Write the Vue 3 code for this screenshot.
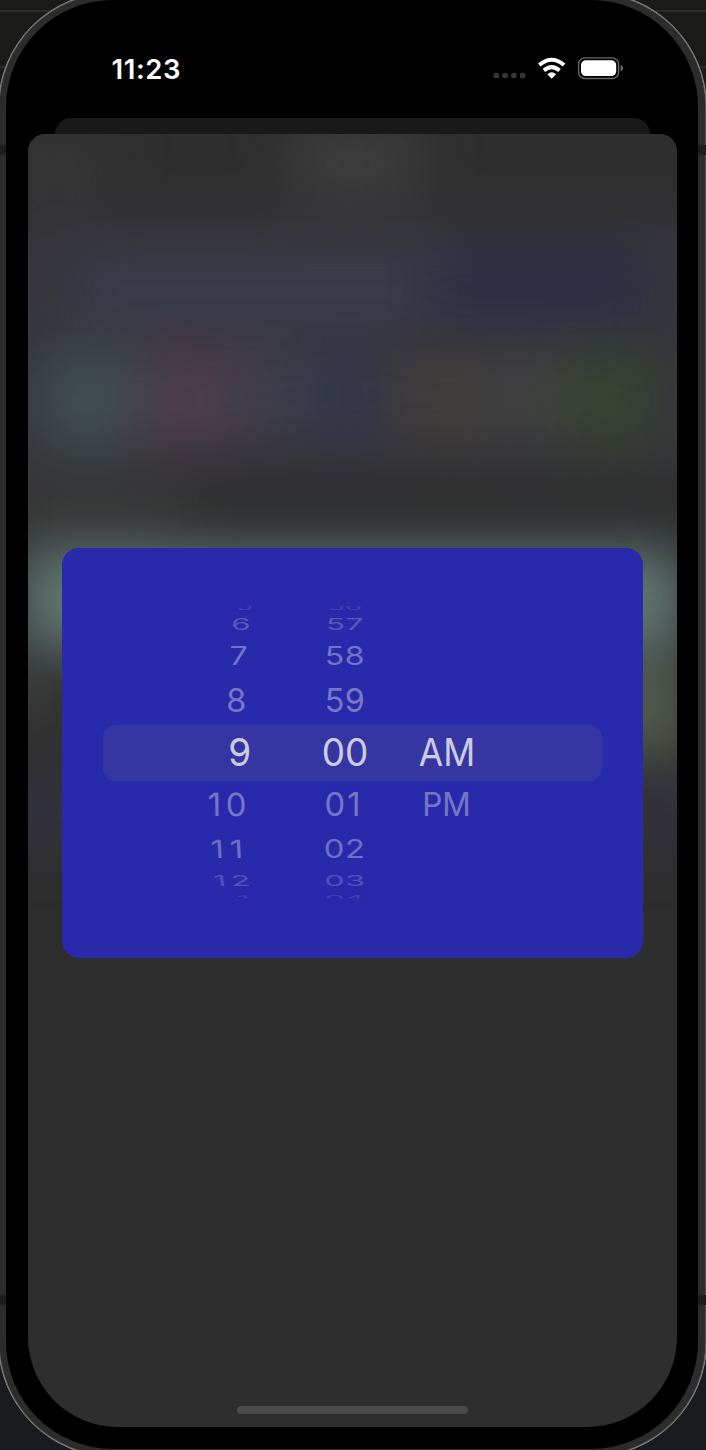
<script setup>
const glows = [
  { x: 0, y: 130, w: 110, h: 70, c: '#3e3e3e', o: 0.5 },
  { x: 290, y: 120, w: 130, h: 80, c: '#474747', o: 0.6 },
  { x: -40, y: 215, w: 785, h: 260, c: '#3b3a42', o: 0.6 },
  { x: 70, y: 250, w: 360, h: 78, c: '#3e3d52', o: 0.7 },
  { x: 430, y: 248, w: 220, h: 78, c: '#2c2d49', o: 0.8 },
  { x: 40, y: 352, w: 98, h: 94, c: '#445356', o: 0.85 },
  { x: 148, y: 352, w: 76, h: 94, c: '#56404f', o: 0.85 },
  { x: 224, y: 352, w: 78, h: 90, c: '#42404f', o: 0.8 },
  { x: 302, y: 346, w: 88, h: 98, c: '#343850', o: 0.8 },
  { x: 392, y: 352, w: 88, h: 94, c: '#433e39', o: 0.85 },
  { x: 480, y: 352, w: 82, h: 90, c: '#434343', o: 0.8 },
  { x: 562, y: 350, w: 96, h: 96, c: '#394531', o: 0.95 },
  { x: 0, y: 470, w: 180, h: 80, c: '#404040', o: 0.5 },
  { x: 22, y: 550, w: 662, h: 98, c: '#637977', o: 1 },
  { x: -40, y: 650, w: 110, h: 80, c: '#3d3d3d', o: 0.7 },
  { x: 600, y: 660, w: 90, h: 96, c: '#545c4e', o: 1 },
  { x: -40, y: 780, w: 785, h: 66, c: '#333242', o: 0.8 },
]

// Each row of the drum: baseline, horizontal / vertical squeeze, and per column
// [label, ink centre, letter spacing, own horizontal squeeze]
const rows = [
  { y: 610.2, sx: 0.73, sy: 0.22, skew: 0, o: 0.14, h: ['5', 244.5], m: ['56', 345] },
  { y: 630.2, sx: 0.81, sy: 0.4, skew: 0, o: 0.25, h: ['6', 241], m: ['57', 344.7, 0.8] },
  { y: 665, sx: 0.83, sy: 0.65, skew: 0, o: 0.4, h: ['7', 238.5], m: ['58', 344.7, 0.6] },
  { y: 712.3, sx: 0.84, sy: 0.84, skew: 0, o: 0.42, h: ['8', 236.2], m: ['59', 344.7, 0.5] },
  { y: 766, sx: 0.96, sy: 1, skew: 0, o: 0.78, h: ['9', 239.7], m: ['00', 345], p: ['AM', 447, 0, 0.92] },
  { y: 816, sx: 0.85, sy: 0.83, skew: 1, o: 0.41, h: ['10', 227.3, 5.5], m: ['01', 342.5, 2.5], p: ['PM', 446.5, 0, 0.82] },
  { y: 858, sx: 0.85, sy: 0.65, skew: 3, o: 0.37, h: ['11', 227.3, 7], m: ['02', 344.3, 0.6] },
  { y: 886, sx: 0.84, sy: 0.39, skew: 8, o: 0.22, h: ['12', 232.5, 5.5], m: ['03', 344.5, 0.4] },
  { y: 900.5, sx: 0.8, sy: 0.2, skew: 12, o: 0.14, h: ['1', 244], m: ['04', 344.5] },
]
const labels = rows.flatMap((r) =>
  ['h', 'm', 'p'].filter((k) => r[k]).map((k) => {
    const [text, cx, gap = 0, sx = r.sx] = r[k]
    return {
      key: k + r.y,
      text,
      gap,
      color: r.sy === 1 ? '#f5f5f3' : '#e4e4ef',
      opacity: r.o,
      transform: `translate(${cx - 62 + (gap * sx) / 2} ${r.y - 548}) skewX(${k === 'h' ? r.skew : 0}) scale(${sx} ${r.sy})`,
    }
  }),
)
</script>

<template>
  <main class="stage">
    <i class="line line-a"></i>
    <i class="line line-b"></i>
    <div class="frame">
      <div class="bezel">
        <header class="status">
          <time>11:23</time>
          <svg class="icons" width="134" height="26" viewBox="491 56 134 26">
            <g fill="#363636">
              <rect v-for="n in 4" :key="n" :x="484.7 + n * 8.8" y="72.7" width="5.6" height="5.6" rx="2" />
            </g>
            <g fill="none" stroke="#fff" stroke-width="3.9">
              <path d="M539.3 65.1Q551.7 54.6 564.1 65.1" />
              <path d="M543.9 70.5Q551.7 63.7 559.5 70.5" />
            </g>
            <path d="M547.4 74.3Q551.7 70.2 556 74.3L551.7 78.7Z" fill="#fff" />
            <rect x="578.6" y="57.9" width="40" height="20.6" rx="6.3" fill="none" stroke="#666" stroke-width="1.4" />
            <rect x="581" y="60.3" width="35.2" height="15.8" rx="4.8" fill="#fff" />
            <path d="M620.7 64.9Q623 65.7 623 68.2T620.7 71.5Z" fill="#707070" />
          </svg>
        </header>
        <div class="behind"></div>
        <section class="sheet">
          <svg class="backdrop" width="649" height="1293" viewBox="28 134 649 1293">
            <defs>
              <filter id="soft" x="-150" y="0" width="1000" height="1100" filterUnits="userSpaceOnUse" color-interpolation-filters="sRGB">
                <feGaussianBlur stdDeviation="27" />
              </filter>
            </defs>
            <g filter="url(#soft)">
              <rect v-for="(g, i) in glows" :key="i" :x="g.x" :y="g.y" :width="g.w" :height="g.h" :fill="g.c" :opacity="g.o" />
            </g>
          </svg>
          <div class="picker">
            <div class="selection"></div>
            <svg class="wheel" width="581" height="410" viewBox="0 0 581 410">
              <defs>
                <clipPath id="drum"><rect x="0" y="58.3" width="581" height="292" /></clipPath>
              </defs>
              <g clip-path="url(#drum)">
                <text v-for="l in labels" :key="l.key" :transform="l.transform" :fill="l.color" :opacity="l.opacity" :letter-spacing="l.gap" text-anchor="middle">{{ l.text }}</text>
              </g>
            </svg>
          </div>
          <div class="home"></div>
        </section>
      </div>
      <i class="band band-a"></i>
      <i class="band band-b"></i>
    </div>
  </main>
</template>

<style>
html,
body {
  margin: 0;
  background: #1b1b1b;
}
</style>

<style scoped>
.stage {
  position: relative;
  width: 706px;
  height: 1450px;
  overflow: hidden;
  background: linear-gradient(#1a1a18 0, #1a1a18 700px, #1a1b1f 1350px, #1a1b1f);
  font-family: Inter, "Liberation Sans", sans-serif;
}
.line {
  position: absolute;
  left: 0;
  width: 706px;
  height: 2px;
  background: #2c2c2b;
}
.line-a { top: 10px; }
.line-b { top: 66px; }
.frame {
  position: relative;
  z-index: 0;
  box-sizing: border-box;
  width: 709px;
  height: 1465px;
  margin: -8px 0 0 -2px;
  padding: 6.5px 7px;
  border: 1px solid #8a8a8a;
  border-radius: 115px;
  background: #2c2c2c;
  box-shadow: inset 0 0 0 0.5px #777;
}
.bezel {
  position: relative;
  box-sizing: border-box;
  width: 692px;
  height: 1449px;
  padding-left: 22px;
  overflow: hidden;
  border-radius: 107px;
  background: #000;
}
.band {
  position: absolute;
  left: 0;
  width: 707px;
  height: 10px;
  background: #1d1d1d;
  clip-path: polygon(0 0, 7px 0, 7px 100%, 0 100%, 0 0, 699px 0, 100% 0, 100% 100%, 699px 100%, 699px 0);
}
.band-a { top: 152px; }
.band-b { top: 1302px; }
.status {
  display: flex;
  align-items: center;
  justify-content: space-between;
  box-sizing: border-box;
  width: 649px;
  height: 118.5px;
  padding: 20px 52px 0 83.5px;
  color: #fff;
}
.status time {
  font-size: 27.5px;
  font-weight: 600;
  line-height: 32px;
  letter-spacing: 0.6px;
}
.icons {
  display: block;
}
.behind {
  width: 595.5px;
  height: 16px;
  margin-left: 26.5px;
  border-radius: 16px 16px 0 0;
  background: #191919;
}
.sheet {
  display: grid;
  grid-template: 413.5px 410px 448px 1fr / 34px 581px 1fr;
  width: 649px;
  height: 1293px;
  overflow: hidden;
  border-radius: 17px 17px 90px 90px;
  background: #2e2e2e;
}
.backdrop {
  grid-area: 1 / 1 / -1 / -1;
  display: block;
}
.picker {
  grid-area: 2 / 2;
  display: grid;
  width: 581px;
  height: 410px;
  border-radius: 17px;
  background: #2929ab;
}
.selection {
  grid-area: 1 / 1;
  align-self: start;
  width: 499px;
  height: 56px;
  margin: 177px 0 0 41px;
  border-radius: 13px;
  background: #3636a3;
}
.wheel {
  grid-area: 1 / 1;
  display: block;
  z-index: 1;
  font-size: 38.5px;
  font-weight: 400;
}
.home {
  grid-area: 4 / 1 / 5 / -1;
  width: 231px;
  height: 8px;
  margin-left: 209px;
  border-radius: 4px;
  background: #4b4b4b;
}
</style>
